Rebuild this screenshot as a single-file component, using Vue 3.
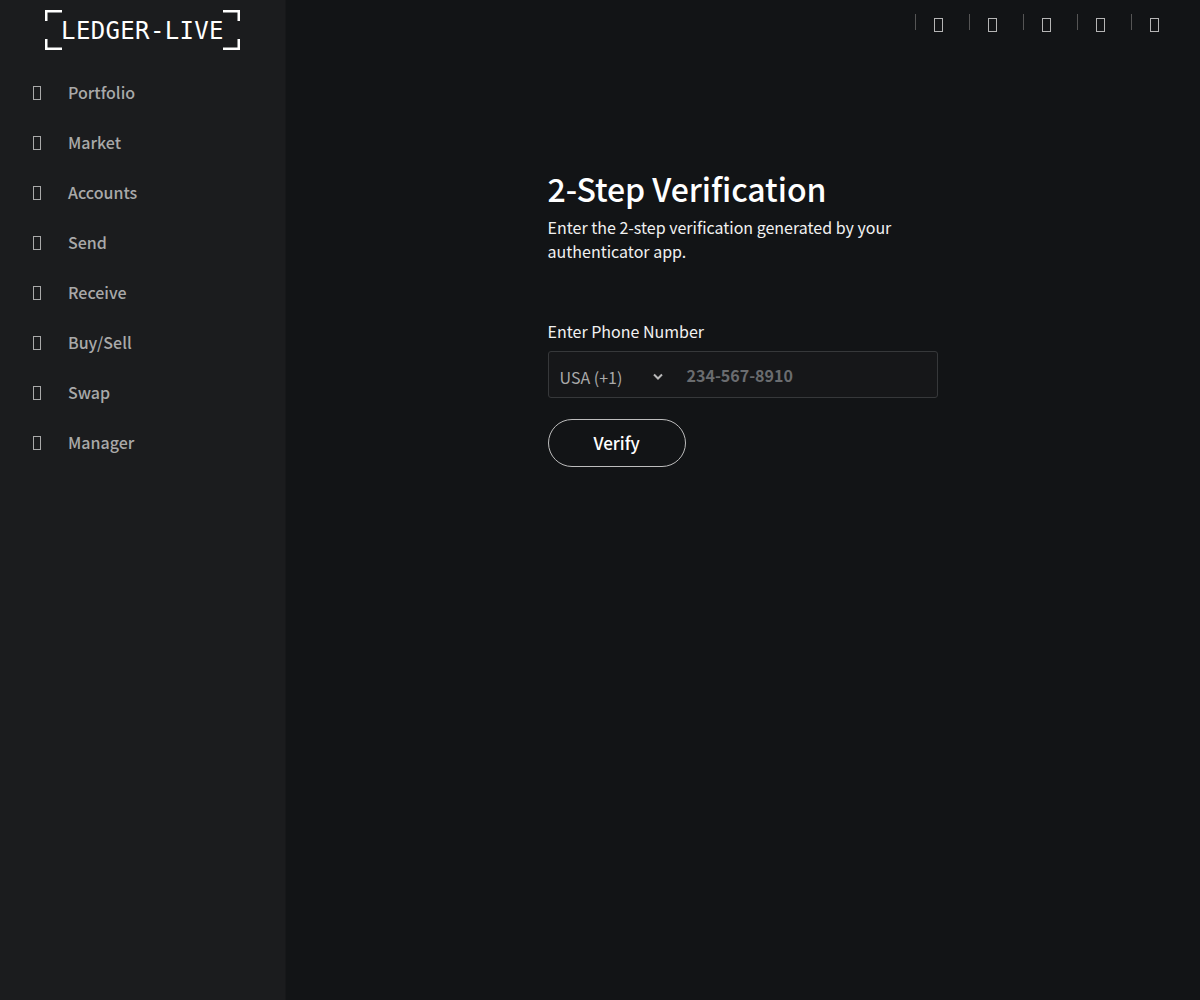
<script setup>
const nav = ['Portfolio', 'Market', 'Accounts', 'Send', 'Receive', 'Buy/Sell', 'Swap', 'Manager']
const tools = [1, 2, 3, 4, 5]
</script>

<template>
  <div class="page">
    <aside class="sidebar">
      <div class="logo">
        <svg class="frame" width="195" height="40" viewBox="0 0 195 40">
          <path d="M17 1.25H1.25V11M178 1.25H193.75V11M17 38.75H1.25V29M178 38.75H193.75V29" fill="none" stroke="#fff" stroke-width="2.5"/>
        </svg>
        <span class="logo-text">LEDGER-LIVE</span>
      </div>
      <nav class="nav">
        <a v-for="item in nav" :key="item" class="nav-item">
          <span class="tofu"></span>
          <span class="nav-label">{{ item }}</span>
        </a>
      </nav>
    </aside>
    <main class="main">
      <header class="topbar">
        <div v-for="t in tools" :key="t" class="tool"><span class="tofu small"></span></div>
      </header>
      <section class="content">
        <h1>2-Step Verification</h1>
        <p class="lead">Enter the 2-step verification generated by your authenticator app.</p>
        <label class="label">Enter Phone Number</label>
        <div class="field">
          <div class="select">
            <span>USA (+1)</span>
            <svg width="10" height="7" viewBox="0 0 10 7"><path d="M1 1.5l4 4 4-4" fill="none" stroke="#b9b9b9" stroke-width="2"/></svg>
          </div>
          <span class="placeholder">234-567-8910</span>
        </div>
        <button class="verify">Verify</button>
      </section>
    </main>
  </div>
</template>

<style>
html, body { margin: 0; background: #121416; }
</style>

<style scoped>
.page {
  display: flex;
  width: 1200px;
  height: 1000px;
  background: #121416;
  color: #fff;
  font-family: "Noto Sans CJK SC", "Noto Sans", sans-serif;
  overflow: hidden;
}
.sidebar {
  width: 286px;
  flex: none;
  background: #1b1c1e;
  border-right: 1px solid #17181a;
  box-sizing: border-box;
  padding-top: 10px;
}
.logo {
  position: relative;
  width: 195px;
  height: 40px;
  margin-left: 45px;
  display: flex;
  align-items: center;
  justify-content: center;
}
.frame { position: absolute; left: 0; top: 0; }
.logo-text {
  font-family: "DejaVu Sans Mono", monospace;
  font-size: 24px;
  letter-spacing: 0.35px;
  color: #fff;
  line-height: 40px;
  padding-top: 2px;
}
.nav { display: flex; flex-direction: column; margin-top: 18px; }
.nav-item {
  display: flex;
  align-items: center;
  height: 50px;
  padding-left: 33px;
  font-size: 16px;
  font-weight: 500;
  color: #a9a9a9;
}
.nav-label { line-height: 24px; padding-bottom: 3px; }
.tofu {
  display: block;
  box-sizing: border-box;
  width: 8px;
  height: 14px;
  margin-right: 27px;
  flex: none;
  border: 1px solid #a9a9a9;
}
.tofu.small { margin: 0; width: 9px; border-color: #b5b5b5; }
.main { flex: 1; min-width: 0; }
.topbar {
  display: flex;
  justify-content: flex-end;
  padding: 14px 15px 0 0;
}
.tool {
  width: 54px;
  height: 16px;
  box-sizing: border-box;
  border-left: 1px solid #555;
  padding: 4px 0 0 18px;
}
.content { width: 390px; margin: 0 0 0 261.6px; padding-top: 136px; }
h1 {
  margin: 0 0 5px;
  font-size: 32px;
  line-height: 44px;
  font-weight: 500;
  letter-spacing: -0.05px;
  color: #fff;
}
.lead {
  margin: 0;
  font-size: 16px;
  line-height: 24px;
  color: #f1f1f1;
}
.label { display: block; margin-top: 56px; font-size: 16px; line-height: 24px; color: #f1f1f1; }
.field {
  display: flex;
  align-items: center;
  height: 47px;
  margin-top: 8px;
  box-sizing: border-box;
  border: 1px solid #36383a;
  border-radius: 3px;
  background: #161719;
}
.select {
  display: flex;
  align-items: center;
  justify-content: space-between;
  width: 103px;
  margin-left: 11px;
  font-size: 16px;
  color: #a9a9a9;
  padding-top: 4px;
}
.placeholder { margin-left: 24px; font-size: 16px; font-weight: 700; color: #6a6c6f; }
.verify {
  display: block;
  width: 138px;
  height: 48px;
  margin-top: 21px;
  padding: 0 0 2px;
  border: 1px solid #bdbdbd;
  border-radius: 24px;
  background: transparent;
  color: #fff;
  font-family: inherit;
  font-size: 17px;
  font-weight: 500;
}
</style>
